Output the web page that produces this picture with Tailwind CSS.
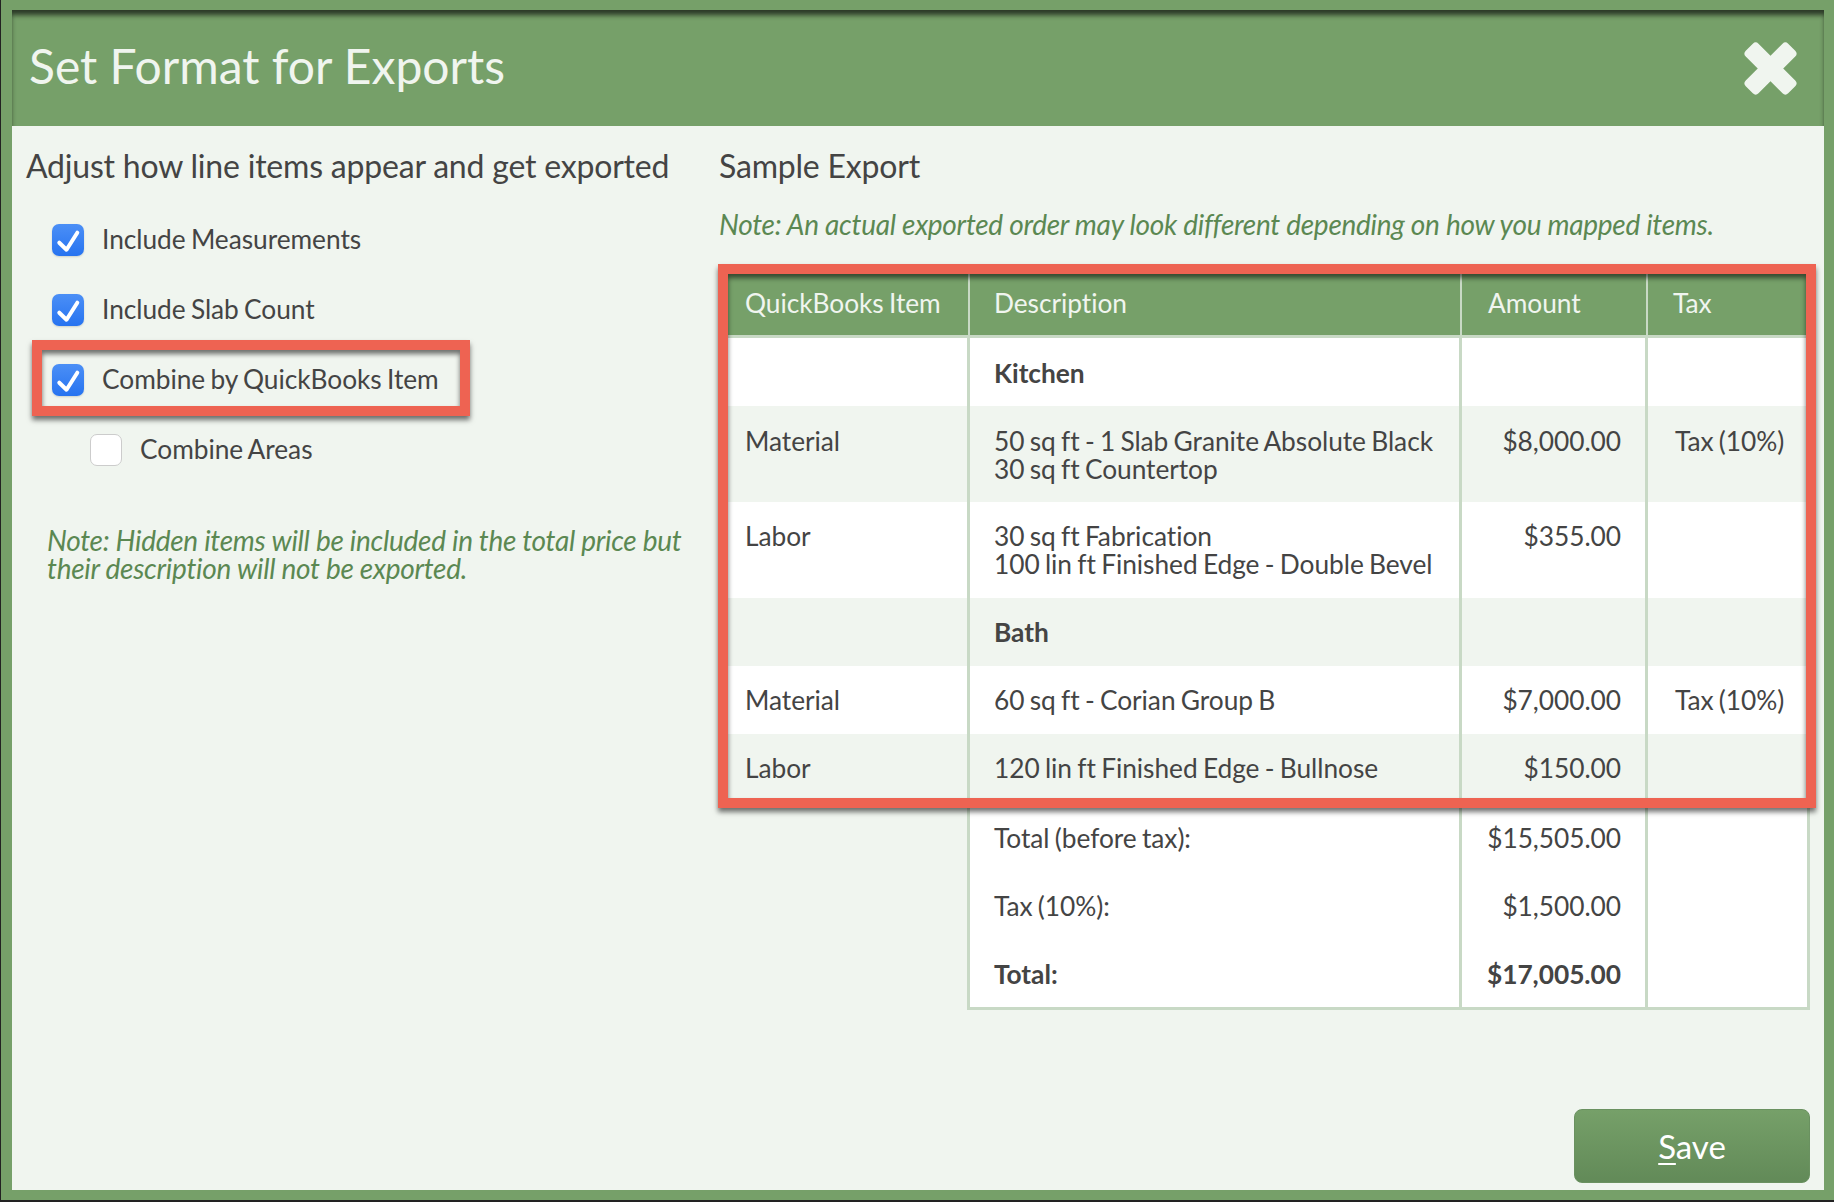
<!DOCTYPE html>
<html lang="en">
<head>
    <meta charset="UTF-8">
    <title>Set Format for Exports</title>
    <script src="https://cdn.jsdelivr.net/npm/@tailwindcss/browser@4"></script>
</head>
<body class="bg-[#76a069] h-[1202px] overflow-hidden font-['Lato',sans-serif] text-[#444] text-[26.3px] leading-[28px] tracking-[-0.04px] [word-spacing:-1.4px]">
    <div class="h-[1202px] pt-[10px] pl-[11px] pr-[10px] border-l border-b-2 border-[#222]">
        <!-- Dialog -->
        <div class="h-[1180px] flex flex-col">
            <!-- Header -->
            <header class="h-[116px] shrink-0 flex items-center justify-between pl-[17px] pr-[27px] bg-[#76a069] shadow-[inset_0_6px_5px_-1px_rgba(30,40,28,0.85)]">
                <h1 class="text-[48px] text-[#f0f5ef] leading-[56px] -mt-[4px] tracking-normal [word-spacing:0]">Set Format for Exports</h1>
                <svg class="w-[53px] h-[53px]" viewBox="0 0 53 53" fill="#f0f5ef">
                    <rect x="-3.5" y="17.5" width="60" height="18" rx="4" transform="rotate(45 26.5 26.5)" />
                    <rect x="-3.5" y="17.5" width="60" height="18" rx="4" transform="rotate(-45 26.5 26.5)" />
                </svg>
            </header>

            <!-- Body -->
            <main class="relative flex-1 grid grid-cols-[706px_1fr] bg-[#f0f5ef]">
                <!-- Options -->
                <section class="pl-[14px] pt-[20px]">
                    <h2 class="text-[32px] leading-[40px] tracking-[-0.2px] [word-spacing:0]">Adjust how line items appear and get exported</h2>
                    <div class="mt-[19px] pl-[26px]">
                        <label class="h-[70px] flex items-center gap-[18px]">
                            <span class="w-8 h-8 rounded-[7px] bg-gradient-to-b from-[#4b8ff6] to-[#2673f0] shadow-[0_1px_2px_rgba(0,0,0,0.15)]">
                                <svg class="w-8 h-8" viewBox="0 0 32 32" fill="none" stroke="#fff" stroke-width="4" stroke-linecap="round" stroke-linejoin="round"><path d="M7.3 18.7l7.2 7L25.3 8.7" /></svg>
                            </span>
                            <span class="-mt-[2px]">Include Measurements</span>
                        </label>
                        <label class="h-[70px] flex items-center gap-[18px]">
                            <span class="w-8 h-8 rounded-[7px] bg-gradient-to-b from-[#4b8ff6] to-[#2673f0] shadow-[0_1px_2px_rgba(0,0,0,0.15)]">
                                <svg class="w-8 h-8" viewBox="0 0 32 32" fill="none" stroke="#fff" stroke-width="4" stroke-linecap="round" stroke-linejoin="round"><path d="M7.3 18.7l7.2 7L25.3 8.7" /></svg>
                            </span>
                            <span class="-mt-[2px]">Include Slab Count</span>
                        </label>
                        <label class="h-[70px] flex items-center gap-[18px]">
                            <span class="w-8 h-8 rounded-[7px] bg-gradient-to-b from-[#4b8ff6] to-[#2673f0] shadow-[0_1px_2px_rgba(0,0,0,0.15)]">
                                <svg class="w-8 h-8" viewBox="0 0 32 32" fill="none" stroke="#fff" stroke-width="4" stroke-linecap="round" stroke-linejoin="round"><path d="M7.3 18.7l7.2 7L25.3 8.7" /></svg>
                            </span>
                            <span class="-mt-[2px]">Combine by QuickBooks Item</span>
                        </label>
                        <label class="h-[70px] flex items-center gap-[18px] pl-[38px]">
                            <span class="w-8 h-8 rounded-[7px] bg-white border border-[#ccc]"></span>
                            <span class="-mt-[2px]">Combine Areas</span>
                        </label>
                    </div>
                    <p class="mt-[41px] ml-[21px] italic text-[28px] tracking-[-0.28px] text-[#5b8852] [word-spacing:0]">Note: Hidden items will be included in the total price but<br>their description will not be exported.</p>
                </section>

                <!-- Sample export -->
                <section class="pl-[1px] pt-[20px]">
                    <h2 class="text-[32px] leading-[40px] tracking-[-0.2px] [word-spacing:0]">Sample Export</h2>
                    <p class="mt-[24px] italic text-[28px] tracking-[-0.28px] text-[#5b8852] [word-spacing:0]">Note: An actual exported order may look different depending on how you mapped items.</p>
                    <table class="mt-[36px] ml-[9px] w-[1082px] table-fixed border-separate border-spacing-0">
                        <colgroup>
                            <col class="w-[242px]"><col class="w-[492px]"><col class="w-[186px]"><col class="w-[162px]">
                        </colgroup>
                        <thead class="bg-[#76a069] text-[#f0f5ef] text-left font-normal">
                            <tr class="h-[64px] align-top">
                                <th class="font-normal pt-[15px] pl-[17px] border-r-2 border-b-[3px] border-[#c8d9c5]">QuickBooks Item</th>
                                <th class="font-normal pt-[15px] pl-[24px] border-r-2 border-b-[3px] border-[#c8d9c5]">Description</th>
                                <th class="font-normal pt-[15px] pl-[26px] border-r-2 border-b-[3px] border-[#c8d9c5]">Amount</th>
                                <th class="font-normal pt-[15px] pl-[25px] border-r-2 border-b-[3px] border-[#c8d9c5]">Tax</th>
                            </tr>
                        </thead>
                        <tbody>
                            <tr class="h-[68px] align-top bg-white">
                                <td class="pt-[21px] pl-[17px] border-r-[3px] border-[#c8d9c5]"></td>
                                <td class="pt-[21px] pl-[24px] border-r-[3px] border-[#c8d9c5] font-bold">Kitchen</td>
                                <td class="pt-[21px] pr-[24px] text-right border-r-[3px] border-[#c8d9c5]"></td>
                                <td class="pt-[21px] pl-[27px] border-r-[3px] border-[#c8d9c5]"></td>
                            </tr>
                            <tr class="h-[96px] align-top bg-[#f0f5ef]">
                                <td class="pt-[21px] pl-[17px] border-r-[3px] border-[#c8d9c5]">Material</td>
                                <td class="pt-[21px] pl-[24px] border-r-[3px] border-[#c8d9c5]">50 sq ft - 1 Slab Granite Absolute Black<br>30 sq ft Countertop</td>
                                <td class="pt-[21px] pr-[24px] text-right border-r-[3px] border-[#c8d9c5]">$8,000.00</td>
                                <td class="pt-[21px] pl-[27px] border-r-[3px] border-[#c8d9c5]">Tax (10%)</td>
                            </tr>
                            <tr class="h-[96px] align-top bg-white">
                                <td class="pt-[20px] pl-[17px] border-r-[3px] border-[#c8d9c5]">Labor</td>
                                <td class="pt-[20px] pl-[24px] border-r-[3px] border-[#c8d9c5]">30 sq ft Fabrication<br>100 lin ft Finished Edge - Double Bevel</td>
                                <td class="pt-[20px] pr-[24px] text-right border-r-[3px] border-[#c8d9c5]">$355.00</td>
                                <td class="pt-[20px] pl-[27px] border-r-[3px] border-[#c8d9c5]"></td>
                            </tr>
                            <tr class="h-[68px] align-top bg-[#f0f5ef]">
                                <td class="pt-[20px] pl-[17px] border-r-[3px] border-[#c8d9c5]"></td>
                                <td class="pt-[20px] pl-[24px] border-r-[3px] border-[#c8d9c5] font-bold">Bath</td>
                                <td class="pt-[20px] pr-[24px] text-right border-r-[3px] border-[#c8d9c5]"></td>
                                <td class="pt-[20px] pl-[27px] border-r-[3px] border-[#c8d9c5]"></td>
                            </tr>
                            <tr class="h-[68px] align-top bg-white">
                                <td class="pt-[20px] pl-[17px] border-r-[3px] border-[#c8d9c5]">Material</td>
                                <td class="pt-[20px] pl-[24px] border-r-[3px] border-[#c8d9c5]">60 sq ft - Corian Group B</td>
                                <td class="pt-[20px] pr-[24px] text-right border-r-[3px] border-[#c8d9c5]">$7,000.00</td>
                                <td class="pt-[20px] pl-[27px] border-r-[3px] border-[#c8d9c5]">Tax (10%)</td>
                            </tr>
                            <tr class="h-[68px] align-top bg-[#f0f5ef]">
                                <td class="pt-[20px] pl-[17px] border-r-[3px] border-[#c8d9c5]">Labor</td>
                                <td class="pt-[20px] pl-[24px] border-r-[3px] border-[#c8d9c5]">120 lin ft Finished Edge - Bullnose</td>
                                <td class="pt-[20px] pr-[24px] text-right border-r-[3px] border-[#c8d9c5]">$150.00</td>
                                <td class="pt-[20px] pl-[27px] border-r-[3px] border-[#c8d9c5]"></td>
                            </tr>
                        </tbody>
                        <tfoot>
                            <tr class="h-[68px] align-top">
                                <td class="border-r-[3px] border-[#c8d9c5]"></td>
                                <td class="pt-[22px] pl-[24px] bg-white border-r-[3px] border-[#c8d9c5]">Total (before tax):</td>
                                <td class="pt-[22px] pr-[24px] bg-white text-right border-r-[3px] border-[#c8d9c5]">$15,505.00</td>
                                <td class="bg-white border-r-[3px] border-[#c8d9c5]"></td>
                            </tr>
                            <tr class="h-[68px] align-top">
                                <td class="border-r-[3px] border-[#c8d9c5]"></td>
                                <td class="pt-[22px] pl-[24px] bg-white border-r-[3px] border-[#c8d9c5]">Tax (10%):</td>
                                <td class="pt-[22px] pr-[24px] bg-white text-right border-r-[3px] border-[#c8d9c5]">$1,500.00</td>
                                <td class="bg-white border-r-[3px] border-[#c8d9c5]"></td>
                            </tr>
                            <tr class="h-[72px] align-top font-bold">
                                <td class="border-r-[3px] border-[#c8d9c5]"></td>
                                <td class="pt-[22px] pl-[24px] bg-white border-r-[3px] border-b-[3px] border-[#c8d9c5]">Total:</td>
                                <td class="pt-[22px] pr-[24px] bg-white text-right border-r-[3px] border-b-[3px] border-[#c8d9c5]">$17,005.00</td>
                                <td class="bg-white border-r-[3px] border-b-[3px] border-[#c8d9c5]"></td>
                            </tr>
                        </tfoot>
                    </table>
                </section>

                <button class="absolute right-[14px] bottom-[7px] w-[236px] h-[74px] rounded-lg border border-[#6a9160] bg-gradient-to-b from-[#76a069] to-[#628a58] text-white text-[33px]"><span class="underline underline-offset-4 decoration-2">S</span>ave</button>

                <!-- Annotation boxes -->
                <div class="absolute left-[20px] top-[214px] w-[438px] h-[76px] border-[10px] border-[#ee6352] shadow-[0_4px_5px_rgba(0,0,0,0.55),inset_0_4px_5px_rgba(0,0,0,0.55)]"></div>
                <div class="absolute left-[706px] top-[138px] w-[1098px] h-[544px] border-[10px] border-[#ee6352] shadow-[0_4px_5px_rgba(0,0,0,0.55),inset_0_4px_5px_rgba(0,0,0,0.55)]"></div>
            </main>
        </div>
    </div>
</body>
</html>
